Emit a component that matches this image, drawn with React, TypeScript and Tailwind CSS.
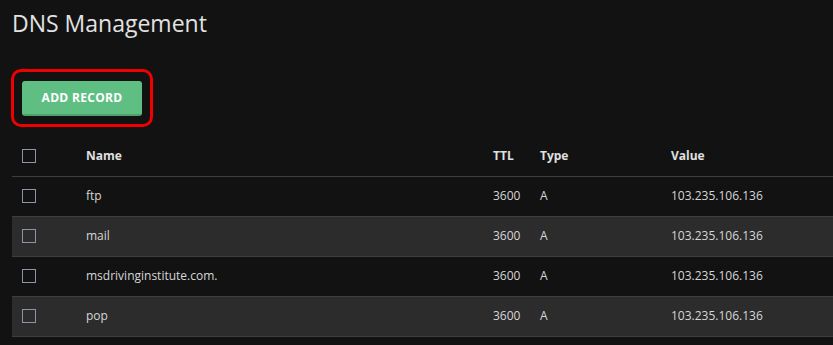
export default function App() {
  const records = [
    { name: "ftp", ttl: 3600, type: "A", value: "103.235.106.136" },
    { name: "mail", ttl: 3600, type: "A", value: "103.235.106.136" },
    { name: "msdrivinginstitute.com.", ttl: 3600, type: "A", value: "103.235.106.136" },
    { name: "pop", ttl: 3600, type: "A", value: "103.235.106.136" },
  ]

  return (
    <div
      className="w-[833px] h-[345px] overflow-hidden bg-[#121212] text-[#d6d6d6]"
      style={{ fontFamily: '"Open Sans", "Liberation Sans", sans-serif' }}
    >
      <div className="pl-3 pt-[8px]">
        <h1 className="text-[23px] leading-[30px] text-[#e2e2e2] font-normal">DNS Management</h1>

        <div className="mt-[31px] -ml-[1px] inline-block rounded-[10px] border-[3px] border-[#f00000] px-[8px] pt-[9px] pb-[8px]">
          <button className="h-[35px] w-[120px] rounded-[3px] bg-[#5fbf83] border-b-2 border-[#4ca46c] text-[12px] font-bold tracking-[0.3px] text-white">
            ADD RECORD
          </button>
        </div>

        <table className="mt-[9px] w-[900px] border-collapse text-left text-[12px]">
          <thead>
            <tr className="h-[40px] border-b border-[#3e3e3e]">
              <th className="w-[64px] pl-[10px]">
                <span className="block h-[14px] w-[14px] border-[1.5px] border-[#8b95a3]" />
              </th>
              <th className="w-[407px] pl-[10px] font-bold text-[#e0e0e0]">Name</th>
              <th className="w-[47px] pl-[10px] font-bold text-[#e0e0e0]">TTL</th>
              <th className="w-[131px] pl-[10px] font-bold text-[#e0e0e0]">Type</th>
              <th className="pl-[10px] font-bold text-[#e0e0e0]">Value</th>
            </tr>
          </thead>
          <tbody>
            {records.map((r, idx) => (
              <tr
                key={r.name}
                className={`h-[40px] border-b border-[#3e3e3e] ${idx % 2 === 1 ? "bg-[#2c2c2c]" : "bg-[#121212]"}`}
              >
                <td className="pl-[10px]">
                  <span className="block h-[14px] w-[14px] border-[1.5px] border-[#8b95a3]" />
                </td>
                <td className="pl-[10px]">{r.name}</td>
                <td className="pl-[10px]">{r.ttl}</td>
                <td className="pl-[10px]">{r.type}</td>
                <td className="pl-[10px]">{r.value}</td>
              </tr>
            ))}
          </tbody>
        </table>
      </div>
    </div>
  )
}
